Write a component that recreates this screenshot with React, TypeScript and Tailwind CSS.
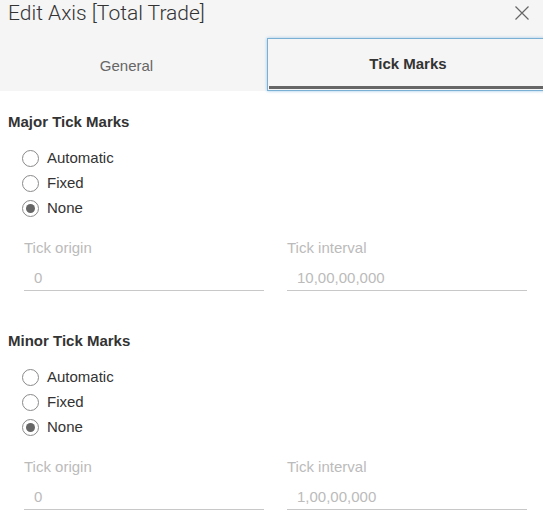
import React, { useState } from 'react';

type Choice = 'automatic' | 'fixed' | 'none';

const options: { value: Choice; label: string }[] = [
  { value: 'automatic', label: 'Automatic' },
  { value: 'fixed', label: 'Fixed' },
  { value: 'none', label: 'None' },
];

const Radio = ({ checked, label, onClick }: { checked: boolean; label: string; onClick: () => void }) => (
  <button onClick={onClick} className="flex items-center h-[25px] text-left">
    <span className="w-[17px] h-[17px] rounded-full border border-[#8a8a8a] bg-white flex items-center justify-center">
      {checked && <span className="w-[9px] h-[9px] rounded-full bg-[#666]" />}
    </span>
    <span className="ml-[8px] text-[15px] text-[#333]">{label}</span>
  </button>
);

const Field = ({ label, value }: { label: string; value: string }) => (
  <div className="w-[240px]">
    <div className="h-[18px] leading-[18px] text-[15px] text-[#bbb]">{label}</div>
    <div className="mt-[12px] h-[18px] leading-[18px] pl-[10px] text-[15px] text-[#bbb]">{value}</div>
    <div className="mt-[3px] h-px bg-[#c8c8c8]" />
  </div>
);

const Section = ({ title, interval }: { title: string; interval: string }) => {
  const [choice, setChoice] = useState<Choice>('none');
  return (
    <div>
      <div className="pl-[8px] h-[18px] leading-[18px] text-[15px] font-bold text-[#333]">{title}</div>
      <div className="mt-[15px] pl-[22px] flex flex-col">
        {options.map(o => (
          <Radio key={o.value} checked={choice === o.value} label={o.label} onClick={() => setChoice(o.value)} />
        ))}
      </div>
      <div className="mt-[18px] pl-[24px] flex gap-[23px]">
        <Field label="Tick origin" value="0" />
        <Field label="Tick interval" value={interval} />
      </div>
    </div>
  );
};

export default function App() {
  const [tab, setTab] = useState<'general' | 'ticks'>('ticks');

  return (
    <div className="w-[543px] h-[519px] overflow-hidden bg-white" style={{ fontFamily: '"Liberation Sans", Arial, sans-serif' }}>
      <div className="bg-[#f5f5f5] h-[91px] flex flex-col">
        <div className="h-[38px] flex items-start justify-between pl-[8px] pr-[12px]">
          <h1 className="mt-[-1px] text-[21px] leading-[28px] font-light text-[#333]" style={{ fontFamily: 'Roboto, "Liberation Sans", sans-serif' }}>
            Edit Axis [Total Trade]
          </h1>
          <svg width="18" height="18" viewBox="0 0 18 18" className="mt-[4px]">
            <path d="M2.5 2.5 L15.5 15.5 M15.5 2.5 L2.5 15.5" stroke="#666" strokeWidth="1.2" fill="none" />
          </svg>
        </div>
        <div className="flex h-[53px]">
          <button
            onClick={() => setTab('general')}
            className={`w-[267px] pr-[14px] pt-[3px] text-[15px] ${tab === 'general' ? 'border border-[#7ab0d4] shadow-[0_0_3px_#9cc8e8] font-bold text-[#333]' : 'text-[#666]'}`}
          >
            General
          </button>
          <button
            onClick={() => setTab('ticks')}
            className={`flex-1 mr-[-6px] text-[15px] ${tab === 'ticks' ? 'border border-[#7ab0d4] shadow-[0_0_3px_#9cc8e8] font-bold text-[#333]' : 'text-[#666]'}`}
          >
            <div className="h-full flex flex-col">
              <div className="flex-1 flex items-center justify-center pt-[4px]">Tick Marks</div>
              {tab === 'ticks' && <div className="mx-[1px] h-[3px] bg-[#666] mb-[1px]" />}
            </div>
          </button>
        </div>
      </div>

      <div className="pt-[22px] flex flex-col gap-[41px]">
        <Section title="Major Tick Marks" interval="10,00,00,000" />
        <Section title="Minor Tick Marks" interval="1,00,00,000" />
      </div>
    </div>
  );
}
